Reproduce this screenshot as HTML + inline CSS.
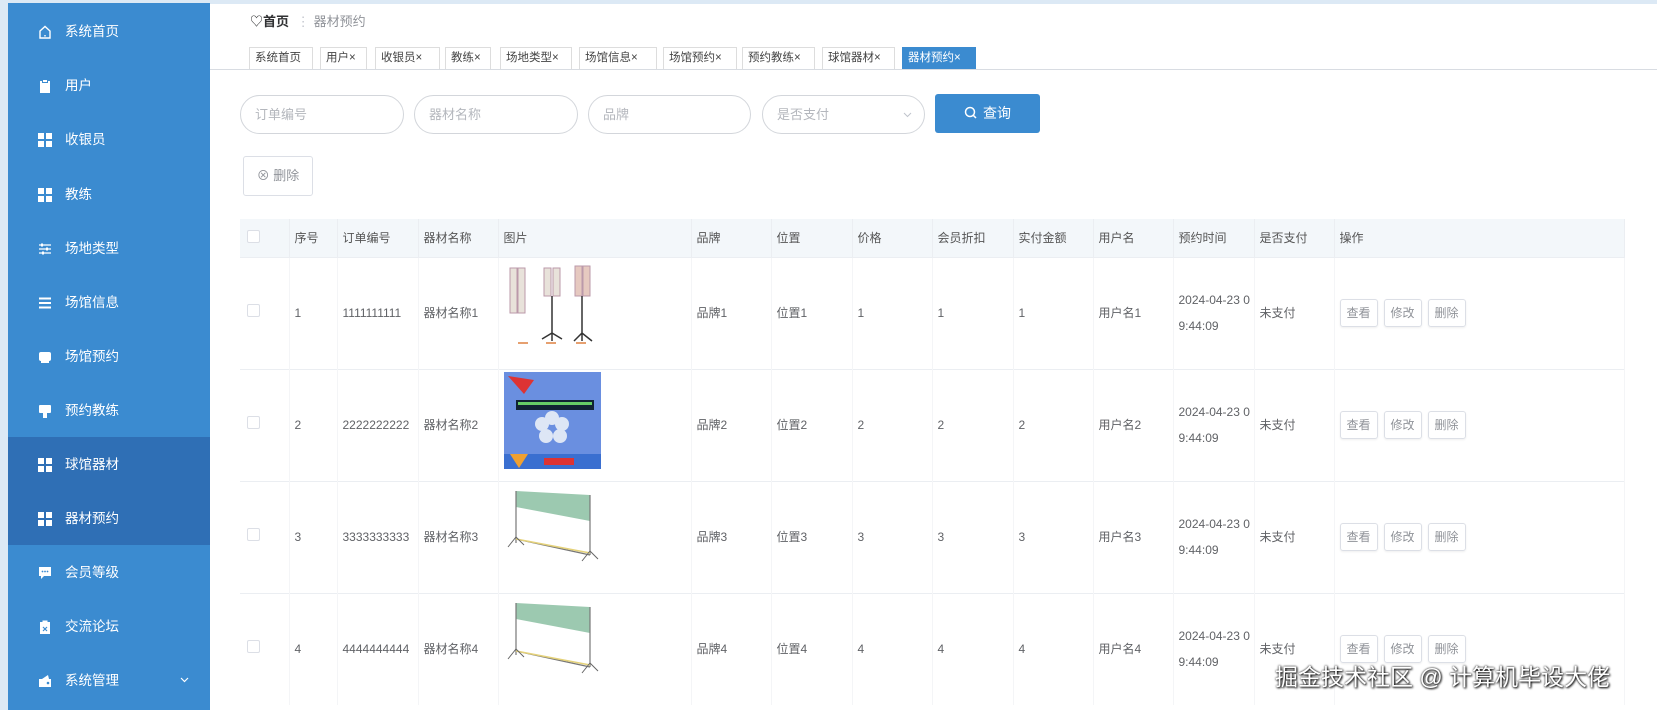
<!DOCTYPE html>
<html><head><meta charset="utf-8"><style>
*{box-sizing:border-box;margin:0;padding:0}
body{width:1657px;height:710px;overflow:hidden;background:#fff;font-family:"Liberation Sans","Noto Sans CJK SC",sans-serif;font-size:12px;color:#606266;position:relative}
.abs{position:absolute}
#topbar{left:0;top:0;width:1657px;height:4px;background:#dce9f5}
#leftbar{left:0;top:0;width:8px;height:710px;background:#dce9f5}
#side{left:8px;top:3px;width:202px;height:707px;background:#3b8bd0}
#active{left:8px;top:437px;width:202px;height:108px;background:#2f6fb5}
.mi{position:absolute;left:8px;width:202px;color:#fff;font-size:13.5px;height:20px;line-height:20px}
.mi .ic{position:absolute;left:30px;top:3px;width:14px;height:14px}
.mi span.t{position:absolute;left:57px}
.grid{background:
linear-gradient(#fff,#fff) 0 0/6px 6px no-repeat,
linear-gradient(#fff,#fff) 8px 0/6px 6px no-repeat,
linear-gradient(#fff,#fff) 0 8px/6px 6px no-repeat,
linear-gradient(#fff,#fff) 8px 8px/6px 6px no-repeat}
.tab{position:absolute;top:47px;height:22px;border:1px solid #ddd;border-bottom:none;font-size:11.5px;color:#444;line-height:20px;padding:0 5px;white-space:nowrap}
.tab.on{background:#3b8bd0;color:#fff;border-color:#3b8bd0}
.inp{position:absolute;top:95px;height:39px;border:1px solid #d3d6db;border-radius:20px;color:#b4b7bd;font-size:13px;line-height:37px;padding-left:14px}
table{position:absolute;left:240px;top:219px;border-collapse:collapse;width:1385px;table-layout:fixed}
th{background:#f3f7fa;height:38px;font-weight:normal;text-align:left;color:#555;font-size:12px;padding-left:5px;border-right:1px solid #ebeef2}
td{height:112px;border-top:1px solid #ebeef2;border-right:1px solid #f4f5f7;padding-left:5px;color:#606266;font-size:12px;line-height:26px}
.cb{display:inline-block;width:13px;height:13px;border:1px solid #dcdfe6;border-radius:2px;background:#fff;margin-left:2px}
.btn{display:inline-block;width:38px;height:28px;border:1px solid #dcdfe6;border-radius:3px;text-align:center;line-height:26px;color:#909399;margin-right:6px;font-size:12px;box-shadow:0 1px 2px #eee}
</style></head><body>
<div class="abs" id="topbar"></div>
<div class="abs" id="leftbar"></div>
<div class="abs" id="side"></div>
<div class="abs" id="active"></div>

<div class="mi" style="top:22px"><svg class="ic" viewBox="0 0 14 14"><path d="M2 6 L7 1.5 L12 6 V13 H2 Z" fill="none" stroke="#fff" stroke-width="1.4"/><rect x="6.3" y="10" width="1.4" height="1.5" fill="#fff"/></svg><span class="t">系统首页</span></div>
<div class="mi" style="top:76px"><svg class="ic" viewBox="0 0 14 14"><rect x="2" y="2" width="10" height="12" fill="#fff"/><rect x="4.5" y="0.5" width="5" height="3" fill="#fff" stroke="#3b8bd0"/></svg><span class="t">用户</span></div>
<div class="mi" style="top:130px"><div class="ic grid"></div><span class="t">收银员</span></div>
<div class="mi" style="top:185px"><div class="ic grid"></div><span class="t">教练</span></div>
<div class="mi" style="top:239px"><svg class="ic" viewBox="0 0 14 14"><path d="M1 3H13M1 7H13M1 11H13" stroke="#fff" stroke-width="1.3"/><rect x="3" y="1.5" width="2" height="3" fill="#fff"/><rect x="8" y="5.5" width="2" height="3" fill="#fff"/><rect x="4" y="9.5" width="2" height="3" fill="#fff"/></svg><span class="t">场地类型</span></div>
<div class="mi" style="top:293px"><svg class="ic" viewBox="0 0 14 14"><path d="M1 2.5H13M1 7H13M1 11.5H13" stroke="#fff" stroke-width="2"/></svg><span class="t">场馆信息</span></div>
<div class="mi" style="top:347px"><svg class="ic" viewBox="0 0 14 14"><rect x="1" y="2" width="12" height="9" rx="2" fill="#fff"/><rect x="3" y="11" width="8" height="2" fill="#fff"/></svg><span class="t">场馆预约</span></div>
<div class="mi" style="top:401px"><svg class="ic" viewBox="0 0 14 14"><rect x="1" y="1" width="12" height="8" rx="1" fill="#fff"/><rect x="5" y="9" width="4" height="5" fill="#fff"/></svg><span class="t">预约教练</span></div>
<div class="mi" style="top:455px"><div class="ic grid"></div><span class="t">球馆器材</span></div>
<div class="mi" style="top:509px"><div class="ic grid"></div><span class="t">器材预约</span></div>
<div class="mi" style="top:563px"><svg class="ic" viewBox="0 0 14 14"><path d="M1 1H13V10H6L3 13V10H1Z" fill="#fff"/><circle cx="4.5" cy="5.5" r=".9" fill="#3b8bd0"/><circle cx="7" cy="5.5" r=".9" fill="#3b8bd0"/><circle cx="9.5" cy="5.5" r=".9" fill="#3b8bd0"/></svg><span class="t">会员等级</span></div>
<div class="mi" style="top:617px"><svg class="ic" viewBox="0 0 14 14"><rect x="2" y="2" width="10" height="12" fill="#fff"/><rect x="4.5" y="0.5" width="5" height="3" fill="#fff"/><path d="M5 7L9 11M9 7L5 11" stroke="#3b8bd0" stroke-width="1.2"/></svg><span class="t">交流论坛</span></div>
<div class="mi" style="top:671px"><svg class="ic" viewBox="0 0 14 14"><path d="M1 5H13V13H1Z" fill="#fff"/><path d="M4 5L10 1L11 5" fill="#fff"/><circle cx="10" cy="9" r="1.3" fill="#3b8bd0"/></svg><span class="t">系统管理</span><svg style="position:absolute;left:172px;top:6px" width="9" height="6" viewBox="0 0 9 6"><path d="M1 1L4.5 4.5L8 1" stroke="#fff" fill="none" stroke-width="1.2"/></svg></div>

<div class="abs" style="left:250px;top:11px;font-size:13px;color:#303133">♡<b style="font-weight:bold">首页</b> <span style="color:#c0c4cc;margin:0 4px">⋮</span><span style="color:#909399">器材预约</span></div>
<div class="abs" style="left:210px;top:69px;width:1447px;height:1px;background:#d8dce2"></div>
<div class="tab" style="left:249px;width:64px">系统首页</div>
<div class="tab" style="left:320px;width:47px">用户×</div>
<div class="tab" style="left:375px;width:65px">收银员×</div>
<div class="tab" style="left:445px;width:46px">教练×</div>
<div class="tab" style="left:500px;width:72px">场地类型×</div>
<div class="tab" style="left:579px;width:78px">场馆信息×</div>
<div class="tab" style="left:663px;width:74px">场馆预约×</div>
<div class="tab" style="left:742px;width:73px">预约教练×</div>
<div class="tab" style="left:822px;width:73px">球馆器材×</div>
<div class="tab on" style="left:902px;width:74px">器材预约×</div>

<div class="inp" style="left:240px;width:164px">订单编号</div>
<div class="inp" style="left:414px;width:164px">器材名称</div>
<div class="inp" style="left:588px;width:163px">品牌</div>
<div class="inp" style="left:762px;width:163px">是否支付<svg style="position:absolute;right:12px;top:16px" width="9" height="6" viewBox="0 0 9 6"><path d="M1 1L4.5 4.5L8 1" stroke="#c0c4cc" fill="none"/></svg></div>
<div class="abs" style="left:935px;top:94px;width:105px;height:39px;background:#3b8bd0;border-radius:3px;color:#fff;font-size:14px;line-height:39px;text-align:center"><svg width="13" height="13" viewBox="0 0 13 13" style="vertical-align:-1px;margin-right:6px"><circle cx="6" cy="6" r="4.5" stroke="#fff" stroke-width="1.5" fill="none"/><path d="M9.3 9.3L12 12" stroke="#fff" stroke-width="1.5"/></svg>查询</div>
<div class="abs" style="left:243px;top:156px;width:70px;height:40px;border:1px solid #dcdfe6;border-radius:3px;color:#909399;font-size:13px;line-height:38px;text-align:center">⊗ 删除</div>

<table>
<colgroup><col style="width:49px"><col style="width:48px"><col style="width:81px"><col style="width:80px"><col style="width:193px"><col style="width:80px"><col style="width:81px"><col style="width:80px"><col style="width:81px"><col style="width:80px"><col style="width:80px"><col style="width:81px"><col style="width:80px"><col></colgroup>
<tr><th><span class="cb"></span></th><th>序号</th><th>订单编号</th><th>器材名称</th><th>图片</th><th>品牌</th><th>位置</th><th>价格</th><th>会员折扣</th><th>实付金额</th><th>用户名</th><th>预约时间</th><th>是否支付</th><th>操作</th></tr>
<tr><td><span class="cb"></span></td><td>1</td><td>1111111111</td><td>器材名称1</td><td>
<svg width="100" height="92" viewBox="0 0 100 92"><g stroke="#b9a" fill="#e8e2da"><rect x="6" y="5" width="7" height="45"/><rect x="14" y="5" width="7" height="45"/><rect x="40" y="5" width="7" height="28"/><rect x="49" y="5" width="7" height="28"/><rect x="71" y="3" width="7" height="30" fill="#e6c9c0"/><rect x="79" y="3" width="7" height="30" fill="#e6c9c0"/></g><path d="M48 33V70M38 76L48 70L58 76M48 70V78M78 33V78M70 78L78 70L88 78" stroke="#333" fill="none" stroke-width="1.5"/><path d="M14 80h10M42 80h10M72 80h10" stroke="#e6a070" stroke-width="2"/></svg></td><td>品牌1</td><td>位置1</td><td>1</td><td>1</td><td>1</td><td>用户名1</td><td>2024-04-23 0<br>9:44:09</td><td>未支付</td><td><span class="btn">查看</span><span class="btn">修改</span><span class="btn">删除</span></td></tr>
<tr><td><span class="cb"></span></td><td>2</td><td>2222222222</td><td>器材名称2</td><td>
<svg width="100" height="98" viewBox="0 0 100 98"><rect width="97" height="97" fill="#6a8fe0"/><path d="M4 4L20 22L30 8" fill="#d33"/><rect x="12" y="28" width="78" height="10" fill="#123"/><rect x="14" y="30" width="74" height="3" fill="#6c6"/><g fill="#dde6f5"><circle cx="38" cy="52" r="7"/><circle cx="48" cy="46" r="7"/><circle cx="58" cy="52" r="7"/><circle cx="42" cy="64" r="7"/><circle cx="56" cy="64" r="7"/></g><rect y="82" width="97" height="15" fill="#3a6fd0"/><path d="M6 82H24L15 96Z" fill="#f0a030"/><rect x="40" y="86" width="30" height="7" fill="#d33"/></svg></td><td>品牌2</td><td>位置2</td><td>2</td><td>2</td><td>2</td><td>用户名2</td><td>2024-04-23 0<br>9:44:09</td><td>未支付</td><td><span class="btn">查看</span><span class="btn">修改</span><span class="btn">删除</span></td></tr>
<tr><td><span class="cb"></span></td><td>3</td><td>3333333333</td><td>器材名称3</td><td>
<svg width="100" height="92" viewBox="0 0 100 92"><path d="M12 4L86 8V34L12 20Z" fill="#9cc9b0"/><path d="M12 4V56M86 8V68M12 52L86 68" stroke="#777" stroke-width="1.2" fill="none"/><path d="M12 52L86 66" stroke="#e5d27a" stroke-width="1.5"/><path d="M4 60L12 50L20 58M78 74L86 64L94 72" stroke="#666" fill="none"/></svg></td><td>品牌3</td><td>位置3</td><td>3</td><td>3</td><td>3</td><td>用户名3</td><td>2024-04-23 0<br>9:44:09</td><td>未支付</td><td><span class="btn">查看</span><span class="btn">修改</span><span class="btn">删除</span></td></tr>
<tr><td><span class="cb"></span></td><td>4</td><td>4444444444</td><td>器材名称4</td><td>
<svg width="100" height="92" viewBox="0 0 100 92"><path d="M12 4L86 8V34L12 20Z" fill="#9cc9b0"/><path d="M12 4V56M86 8V68M12 52L86 68" stroke="#777" stroke-width="1.2" fill="none"/><path d="M12 52L86 66" stroke="#e5d27a" stroke-width="1.5"/><path d="M4 60L12 50L20 58M78 74L86 64L94 72" stroke="#666" fill="none"/></svg></td><td>品牌4</td><td>位置4</td><td>4</td><td>4</td><td>4</td><td>用户名4</td><td>2024-04-23 0<br>9:44:09</td><td>未支付</td><td><span class="btn">查看</span><span class="btn">修改</span><span class="btn">删除</span></td></tr>
</table>
<div class="abs" style="left:1275px;top:658px;font-size:23px;color:#fff;text-shadow:0 0 2px #000,1px 1px 2px #000;white-space:nowrap">掘金技术社区 @ 计算机毕设大佬</div>
</body></html>
